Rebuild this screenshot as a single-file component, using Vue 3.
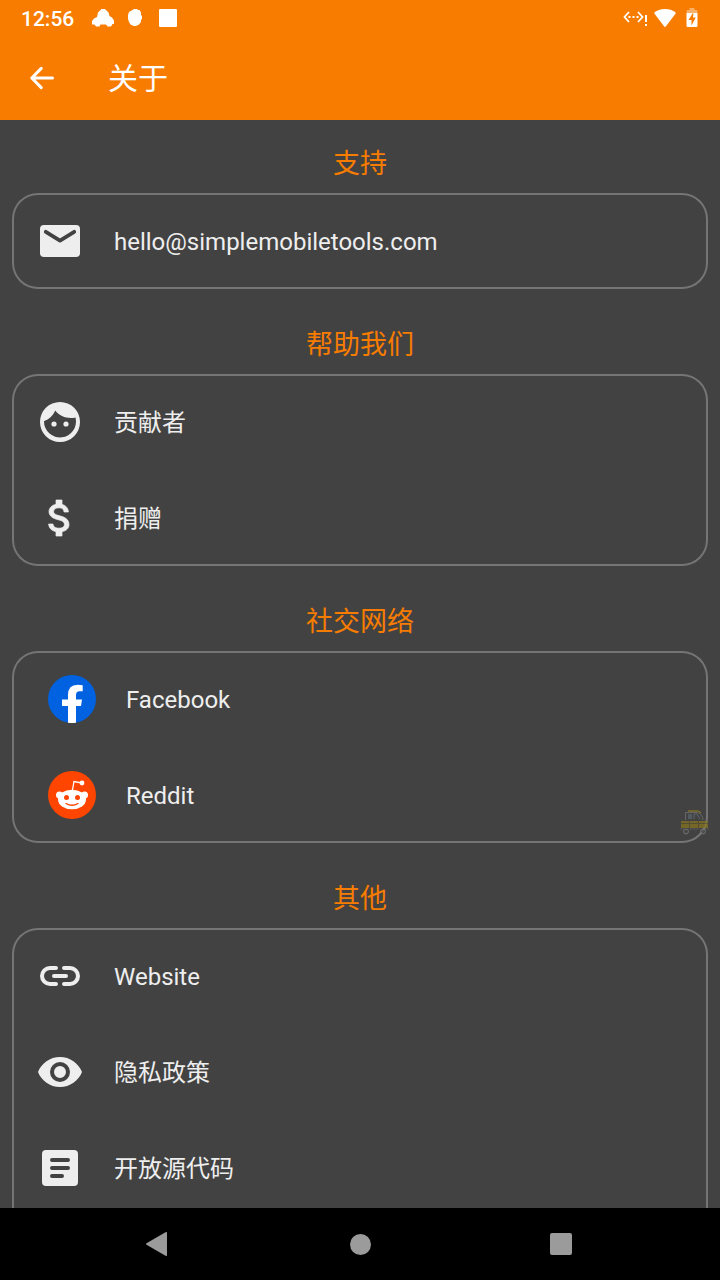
<script setup>
const sections = [
  {
    title: '支持',
    rows: [{ icon: 'mail', label: 'hello@simplemobiletools.com', href: 'mailto:hello@simplemobiletools.com' }],
  },
  {
    title: '帮助我们',
    rows: [
      { icon: 'face', label: '贡献者', href: '#contributors' },
      { icon: 'money', label: '捐赠', href: '#donate' },
    ],
  },
  {
    title: '社交网络',
    social: true,
    rows: [
      { icon: 'facebook', label: 'Facebook', href: '#facebook' },
      { icon: 'reddit', label: 'Reddit', href: '#reddit' },
    ],
  },
  {
    title: '其他',
    open: true,
    rows: [
      { icon: 'link', label: 'Website', href: '#website' },
      { icon: 'eye', label: '隐私政策', href: '#privacy' },
      { icon: 'article', label: '开放源代码', href: '#licenses' },
    ],
  },
]
</script>

<template>
  <div class="screen">
    <header class="top">
      <div class="status">
        <div class="status-left">
          <span class="clock">12:56</span>
          <svg class="s-car" viewBox="0 0 22 18" aria-hidden="true">
            <path d="M5 8 6 3.500 8 1.500 9.500 0H13L14.500 1.500 16.500 3.500 17.500 7 20 8.500 22 11.500V15H20.500L19 17.500H15.500L14 15.500H8.500L7.500 17.500H4L2.500 15.500H0V12L2 9.500Z" />
          </svg>
          <svg class="s-blob" viewBox="0 0 14 18" aria-hidden="true">
            <path d="M4.500 1 6 0H9L10 1H11.500L13 3.500V6L14 7V10L13 11V13L11 15.500 8 17H5.500L2.500 15.500 1 13 0 10V6L1 3Z" />
          </svg>
          <svg class="s-square" viewBox="0 0 18 18" aria-hidden="true"><rect width="18" height="18" rx="1" /></svg>
        </div>
        <div class="status-right">
          <svg class="s-net" viewBox="0 0 24 20" aria-hidden="true">
            <path d="M6 4 1.500 9 6 14M15 4l4.500 5-4.500 5" fill="none" stroke="currentColor" stroke-width="1.800" />
            <path d="M5.500 8h2v2h-2zM9.500 8h2v2h-2zM13.500 8h2v2h-2zM22 7h2v7h-2zM22 16h2v2h-2z" />
          </svg>
          <svg class="s-wifi" viewBox="0 0 24 20" aria-hidden="true">
            <path d="M1 5Q5 1 12 1T23 5L12.800 18.500Q12 19.400 11.200 18.500Z" />
          </svg>
          <svg class="s-battery" viewBox="0 0 12 20" aria-hidden="true">
            <path d="M1.500 2H3.500V0h5v2h2Q11.500 2 11.500 3V5H.5V3Q.5 2 1.500 2Z" opacity=".4" />
            <path fill-rule="evenodd" d="M.5 5h11v13q0 1-1 1h-9q-1 0-1-1ZM7.500 4 2.500 12H5.500V17.500L9.800 9.500H7Z" />
          </svg>
        </div>
      </div>
      <div class="toolbar">
        <button class="back" type="button" aria-label="返回">
          <svg viewBox="0 0 24 24" aria-hidden="true">
            <path d="M19 12H5.200M11.500 5.600 5.200 12l6.300 6.400" fill="none" stroke="currentColor" stroke-width="2" stroke-linecap="round" stroke-linejoin="round" />
          </svg>
        </button>
        <h1>关于</h1>
      </div>
    </header>

    <main class="content">
      <section v-for="s in sections" :key="s.title">
        <h2>{{ s.title }}</h2>
        <div class="card" :class="{ social: s.social, open: s.open }">
          <a v-for="r in s.rows" :key="r.label" class="row" :href="r.href">
            <svg class="icon" :viewBox="s.social ? '0 0 48 48' : '0 0 24 24'" aria-hidden="true">
              <template v-if="r.icon === 'mail'">
                <rect x="2" y="4" width="20" height="16" rx="2" />
                <path d="M4.900 7.400 12 11.800 19.100 7.400" fill="none" stroke="#424242" stroke-width="1.900" stroke-linecap="round" stroke-linejoin="round" />
              </template>
              <template v-else-if="r.icon === 'face'">
                <path fill-rule="evenodd" d="M12 2a10 10 0 1 0 0 20 10 10 0 0 0 0-20ZM4 11.600C6.600 10.700 8.600 8.800 9.600 6.300 11.500 8.800 14.300 10 17.500 10q1.200 0 2.250-.25A8 8 0 1 1 4 11.600Z" />
                <circle cx="9" cy="13" r="1.300" />
                <circle cx="15" cy="13" r="1.300" />
              </template>
              <path v-else-if="r.icon === 'money'" stroke="currentColor" stroke-width=".35" d="M11.800 10.900c-2.270-.59-3-1.200-3-2.150 0-1.090 1.010-1.850 2.700-1.850 1.780 0 2.440.85 2.500 2.100h2.210c-.07-1.720-1.120-3.300-3.210-3.810V3h-3v2.160c-1.940.42-3.500 1.680-3.500 3.610 0 2.310 1.910 3.460 4.700 4.130 2.500.6 3 1.480 3 2.410 0 .69-.49 1.790-2.700 1.790-2.060 0-2.870-.92-2.980-2.100h-2.200c.12 2.190 1.760 3.420 3.680 3.830V21h3v-2.150c1.950-.37 3.500-1.500 3.500-3.550 0-2.840-2.430-3.810-4.700-4.400Z" />
              <template v-else-if="r.icon === 'facebook'">
                <circle cx="24" cy="24" r="24" fill="#0062e0" />
                <path fill="#fff" d="M20 47.700V31h-6v-6.500h6V20q0-10.300 9.700-10.300 3 0 5 .5v6h-3.200Q28 16.200 28 20v4.500h6L33 31h-5v16.700q-4 .6-8 0Z" />
              </template>
              <template v-else-if="r.icon === 'reddit'">
                <circle cx="24" cy="24" r="24" fill="#ff4500" />
                <g fill="#fff">
                  <circle cx="11.500" cy="24" r="3.500" />
                  <circle cx="36.500" cy="24" r="3.500" />
                  <ellipse cx="24" cy="28.500" rx="14" ry="9.800" />
                  <circle cx="34" cy="12" r="2.400" />
                </g>
                <path d="M24.300 20 26 10.500 34 12" fill="none" stroke="#fff" stroke-width="1.300" />
                <circle cx="18.500" cy="26.500" r="2.500" fill="#ff4500" />
                <circle cx="29.500" cy="26.500" r="2.500" fill="#ff4500" />
                <path d="M18 32.500q6 3.500 12 0" fill="none" stroke="#ff4500" stroke-width="1.400" stroke-linecap="round" />
              </template>
              <path v-else-if="r.icon === 'link'" d="M10 8H7a4 4 0 0 0 0 8h3M14 8h3a4 4 0 0 1 0 8h-3M9 12h6" fill="none" stroke="currentColor" stroke-width="2" stroke-linecap="round" />
              <path v-else-if="r.icon === 'eye'" fill-rule="evenodd" d="M12 4.500C7 4.500 2.730 7.610 1 12c1.730 4.390 6 7.500 11 7.500s9.270-3.110 11-7.500c-1.730-4.390-6-7.500-11-7.500ZM12 17a5 5 0 1 1 0-10 5 5 0 0 1 0 10Zm0-8a3 3 0 1 0 0 6 3 3 0 0 0 0-6Z" />
              <template v-else>
                <rect x="3" y="3" width="18" height="18" rx="2" />
                <path d="M8 8h8M8 12h8M8 16h5" fill="none" stroke="#424242" stroke-width="2" stroke-linecap="round" />
              </template>
            </svg>
            <span>{{ r.label }}</span>
          </a>
          <svg v-if="s.social" class="taxi" viewBox="0 0 30 28" aria-hidden="true">
            <path d="M6.500 12V4.500h12q5 1.500 5.500 7.500" fill="none" stroke="#777" />
            <path d="M9 3h10l3 2" fill="none" stroke="#96811c" stroke-width="1.500" />
            <path d="M9 6h4v5H9z" fill="#5a6570" />
            <path d="M15 11V6h3l3 5" fill="none" stroke="#6b7680" />
            <path d="M2 13h27v7H2z" fill="#8a781d" />
            <path d="M10.500 13v7M19.500 13v7M2 15.500h27" fill="none" stroke="#5d5430" />
            <path d="M1 21h4M10 21h10M26 21h4" fill="none" stroke="#606060" />
            <circle cx="7" cy="23.500" r="2.500" fill="#4a4a4a" stroke="#858585" />
            <circle cx="24" cy="23.500" r="2.500" fill="#4a4a4a" stroke="#858585" />
          </svg>
        </div>
      </section>
    </main>

    <nav class="nav">
      <button type="button" aria-label="后退">
        <svg viewBox="0 0 48 48" aria-hidden="true"><path d="M10.500 23.200 29.500 12.200Q31 11.500 31 13V35Q31 36.500 29.500 35.800L10.500 24.800Q9.500 24 10.500 23.200Z" /></svg>
      </button>
      <button type="button" aria-label="主屏幕">
        <svg viewBox="0 0 48 48" aria-hidden="true"><circle cx="24.500" cy="24.500" r="10.500" /></svg>
      </button>
      <button type="button" aria-label="最近任务">
        <svg viewBox="0 0 48 48" aria-hidden="true"><rect x="14" y="13" width="22" height="22" rx="2" /></svg>
      </button>
    </nav>
  </div>
</template>

<style>
body {
  margin: 0;
  background: #424242;
}
</style>

<style scoped>
.screen {
  display: flex;
  flex-direction: column;
  height: 100vh;
  background: #424242;
  color: #eee;
  font-family: Roboto, "Noto Sans CJK SC", sans-serif;
}
svg {
  display: block;
  flex: none;
  fill: currentColor;
}
button {
  display: flex;
  padding: 0;
  border: 0;
  background: none;
  color: inherit;
}
.top {
  flex: none;
  background: #f77c00;
  color: #fff;
}
.status {
  display: flex;
  justify-content: space-between;
  height: 36px;
  padding: 0 22px 0 21px;
}
.status-left,
.status-right {
  display: flex;
  align-items: center;
}
.clock {
  margin-right: 18px;
  padding-top: 2px;
  font-size: 21px;
  font-weight: 500;
  line-height: 34px;
}
.s-car {
  width: 22px;
  height: 18px;
  margin-right: 14px;
}
.s-blob {
  width: 14px;
  height: 18px;
  margin-right: 17px;
}
.s-square {
  width: 18px;
  height: 18px;
}
.s-net {
  width: 24px;
  height: 20px;
  margin-right: 6px;
}
.s-wifi {
  width: 24px;
  height: 20px;
  margin-right: 9px;
}
.s-battery {
  width: 12px;
  height: 20px;
}
.toolbar {
  display: flex;
  align-items: center;
  gap: 48px;
  height: 84px;
  padding: 0 24px;
}
.back svg {
  width: 36px;
  height: 36px;
}
h1 {
  margin: 0;
  padding-top: 2px;
  font-size: 30px;
  font-weight: 400;
  line-height: 36px;
}
.content {
  flex: 1;
  min-height: 0;
  overflow: hidden;
  padding: 0 12px;
}
section {
  margin-bottom: 12px;
}
h2 {
  margin: 0;
  padding: 25px 0 10px;
  color: #f77c00;
  font-size: 27px;
  font-weight: 400;
  line-height: 38px;
  text-align: center;
}
.card {
  position: relative;
  border-radius: 26px;
  box-shadow: inset 0 0 0 2px #757575;
}
.card.open {
  padding-bottom: 96px;
}
.row {
  display: flex;
  align-items: center;
  gap: 30px;
  height: 96px;
  padding: 0 24px;
  color: inherit;
  font-size: 24px;
  line-height: 36px;
  text-decoration: none;
}
.row span {
  padding-top: 2px;
}
.social .row {
  padding: 0 36px;
}
.icon {
  width: 48px;
  height: 48px;
}
.taxi {
  position: absolute;
  right: -1px;
  bottom: 7px;
  width: 30px;
  height: 28px;
  opacity: 0.7;
}
.nav {
  display: flex;
  flex: none;
  align-items: center;
  justify-content: center;
  gap: 152px;
  height: 72px;
  background: #000;
  color: #9b9b9b;
}
.nav svg {
  width: 48px;
  height: 48px;
}
</style>
